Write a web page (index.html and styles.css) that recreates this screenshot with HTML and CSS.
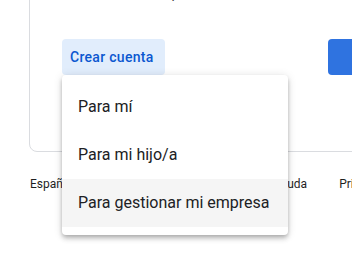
FILE: index.html
```html
<!DOCTYPE html>
<html lang="es">
<head>
    <meta charset="UTF-8">
    <meta name="viewport" content="width=device-width, initial-scale=1.0">
    <title>Iniciar sesión</title>
    <link rel="stylesheet" href="styles.css">
</head>
<body>
    <div class="page">
        <div class="card">
            <p class="hint">Usa el modo Invitado para</p>
            <div class="actions">
                <div class="create">
                    <button type="button" class="btn-text">Crear cuenta</button>
                    <ul class="menu">
                        <li>Para mí</li>
                        <li>Para mi hijo/a</li>
                        <li class="active">Para gestionar mi empresa</li>
                    </ul>
                </div>
                <button type="button" class="btn-primary">Siguiente</button>
            </div>
        </div>
        <footer class="footer">
            <span class="lang">Español (España)</span>
            <nav class="links">
                <a href="#">Ayuda</a>
                <a href="#">Privacidad</a>
                <a href="#">Términos</a>
            </nav>
        </footer>
    </div>
</body>
</html>
```

FILE: styles.css
```css
html {
    height: 100%;
    overflow: hidden;
}
body {
    margin: 0;
    min-height: 100%;
    background: #fff;
    font-family: Roboto, "Noto Sans", Arial, sans-serif;
    color: #1f1f1f;
}
.page {
    width: 500px;
    padding-left: 29px;
}
.card {
    margin-top: -60px;
    height: 212px;
    border: 1px solid #dadce0;
    border-radius: 8px;
    box-sizing: border-box;
    padding: 0 0 0 32px;
}
.hint {
    margin: 0;
    padding-top: 42px;
    height: 98px;
    box-sizing: border-box;
    font-size: 14px;
    line-height: 20px;
    color: #444746;
    white-space: nowrap;
    text-indent: -25px;
}
.actions {
    display: flex;
    gap: 163px;
}
.create {
    position: relative;
}
.btn-text {
    width: 103px;
    height: 36px;
    padding: 0 0 0 8px;
    border: none;
    border-radius: 4px;
    background: #e1edfc;
    color: #0b57d0;
    font-family: Roboto, "Noto Sans", Arial, sans-serif;
    font-size: 14px;
    font-weight: 500;
    letter-spacing: 0.3px;
    text-align: left;
    cursor: pointer;
}
.btn-primary {
    width: 110px;
    height: 36px;
    border: none;
    border-radius: 4px;
    background: #2f73e0;
    color: #fff;
    font-size: 14px;
}
.menu {
    position: absolute;
    left: 0;
    top: 36px;
    width: 226px;
    margin: 0;
    padding: 8px 0;
    list-style: none;
    background: #fff;
    border-radius: 4px;
    box-shadow: 0 2px 4px -1px rgba(0, 0, 0, 0.2), 0 4px 5px 0 rgba(0, 0, 0, 0.14), 0 1px 10px 0 rgba(0, 0, 0, 0.12);
    z-index: 2;
}
.menu li {
    height: 48px;
    line-height: 48px;
    padding: 0 16px;
    font-size: 16px;
    color: #202124;
    white-space: nowrap;
}
.menu li.active {
    background: #f5f5f5;
}
.footer {
    display: flex;
    margin-top: 24px;
    font-size: 12px;
    line-height: 16px;
    color: #1f1f1f;
}
.lang {
    flex: 0 0 244px;
    padding-left: 1px;
    white-space: nowrap;
}
.links {
    display: flex;
    gap: 32px;
}
.links a {
    color: #1f1f1f;
    text-decoration: none;
    white-space: nowrap;
}
```
